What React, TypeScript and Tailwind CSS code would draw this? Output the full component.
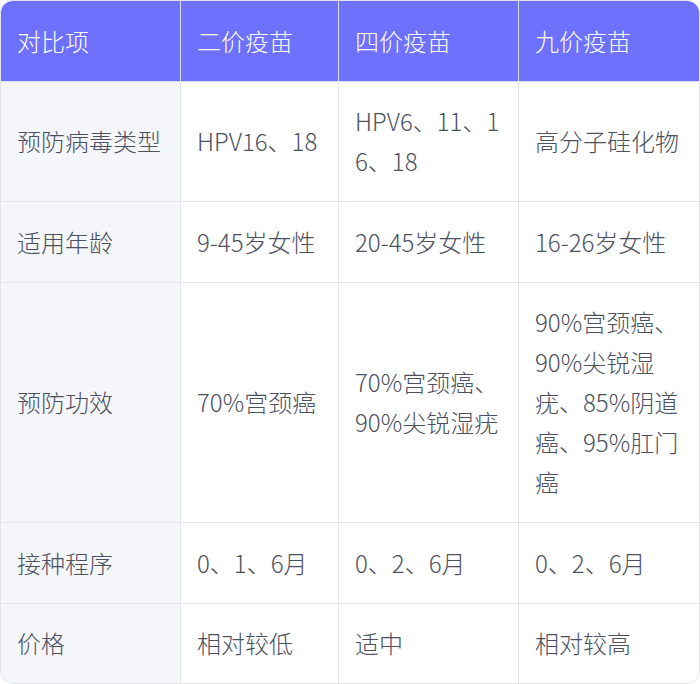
const HEADERS = ["对比项", "二价疫苗", "四价疫苗", "九价疫苗"];

const ROWS: string[][] = [
  ["预防病毒类型", "HPV16、18", "HPV6、11、16、18", "高分子硅化物"],
  ["适用年龄", "9-45岁女性", "20-45岁女性", "16-26岁女性"],
  ["预防功效", "70%宫颈癌", "70%宫颈癌、90%尖锐湿疣", "90%宫颈癌、90%尖锐湿疣、85%阴道癌、95%肛门癌"],
  ["接种程序", "0、1、6月", "0、2、6月", "0、2、6月"],
  ["价格", "相对较低", "适中", "相对较高"],
];

// the reference wraps this one in the middle of "16"
const SPLIT = "HPV6、11、16、18";

export default function App() {
  return (
    <div
      className="w-[700px] h-[684px] bg-white"
      style={{ fontFamily: '"Noto Sans CJK SC", "Noto Sans", sans-serif' }}
    >
      <div className="border border-[#e2e4ea] rounded-[13px] overflow-hidden">
        <div className="grid grid-cols-[180px_158px_180px_180px] text-[24px] leading-[40px] font-light">
          {/* header */}
          {HEADERS.map((h, i) => (
            <div
              key={h}
              className={`bg-[#6d71fe] text-white px-4 py-[19.75px] flex items-center border-b border-[#dcdef0] ${
                i < 3 ? "border-r" : ""
              }`}
            >
              {h}
            </div>
          ))}

          {/* body */}
          {ROWS.map((row, r) =>
            row.map((cell, c) => (
              <div
                key={`${r}-${c}`}
                className={`py-[19.75px] flex items-center text-[#4b5160] break-all border-[#e2e4ea] ${
                  cell === SPLIT ? "pl-4 pr-0" : "px-4"
                } ${c === 0 ? "bg-[#f5f6fa]" : "bg-white"} ${c < 3 ? "border-r" : ""} ${
                  r < ROWS.length - 1 ? "border-b" : ""
                }`}
              >
                {cell === SPLIT ? (
                  <span>
                    <span className="block whitespace-nowrap">HPV6、11、1</span>
                    <span className="block whitespace-nowrap">6、18</span>
                  </span>
                ) : (
                  <span>{cell}</span>
                )}
              </div>
            ))
          )}
        </div>
      </div>
    </div>
  );
}
